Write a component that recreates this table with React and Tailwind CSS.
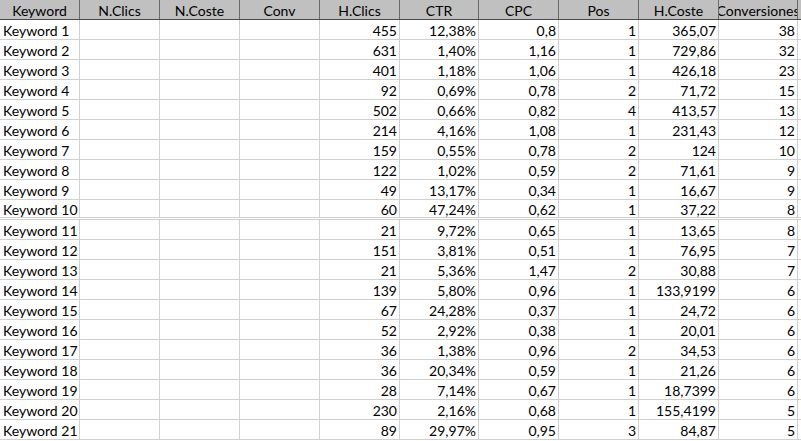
import React from "react";

const headers = ["Keyword", "N.Clics", "N.Coste", "Conv", "H.Clics", "CTR", "CPC", "Pos", "H.Coste", "Conversiones"];

const rows = [
  [455, "12,38%", "0,8", 1, "365,07", 38],
  [631, "1,40%", "1,16", 1, "729,86", 32],
  [401, "1,18%", "1,06", 1, "426,18", 23],
  [92, "0,69%", "0,78", 2, "71,72", 15],
  [502, "0,66%", "0,82", 4, "413,57", 13],
  [214, "4,16%", "1,08", 1, "231,43", 12],
  [159, "0,55%", "0,78", 2, "124", 10],
  [122, "1,02%", "0,59", 2, "71,61", 9],
  [49, "13,17%", "0,34", 1, "16,67", 9],
  [60, "47,24%", "0,62", 1, "37,22", 8],
  [21, "9,72%", "0,65", 1, "13,65", 8],
  [151, "3,81%", "0,51", 1, "76,95", 7],
  [21, "5,36%", "1,47", 2, "30,88", 7],
  [139, "5,80%", "0,96", 1, "133,9199", 6],
  [67, "24,28%", "0,37", 1, "24,72", 6],
  [52, "2,92%", "0,38", 1, "20,01", 6],
  [36, "1,38%", "0,96", 2, "34,53", 6],
  [36, "20,34%", "0,59", 1, "21,26", 6],
  [28, "7,14%", "0,67", 1, "18,7399", 6],
  [230, "2,16%", "0,68", 1, "155,4199", 5],
  [89, "29,97%", "0,95", 3, "84,87", 5],
];

const cols = "grid grid-cols-[80px_80px_80px_80px_80px_79px_80px_80px_80px_79px]";

const App = () => {
  return (
    <div className="w-[801px] h-[441px] bg-white overflow-hidden text-[14px] leading-none text-black" style={{ fontFamily: "Lato, 'Open Sans', sans-serif" }}>
      <div className={`${cols} h-[20px] bg-[#c0c0c0] border-b border-[#4a4a4a]`}>
        {headers.map((h) => (
          <div
            key={h}
            className="flex items-center justify-center pt-[2px] overflow-hidden whitespace-nowrap border-r border-[#6b6b6b]"
          >
            {h}
          </div>
        ))}
      </div>

      {rows.map((r, idx) => (
        <div
          key={idx}
          className={`${cols} h-[20px] ${idx === 9 ? "border-b-[3px] border-double" : "border-b"} border-[#d0d0d0]`}
        >
          <div className="flex items-center pt-[2px] pl-[3px] border-r border-[#d0d0d0] whitespace-nowrap">Keyword {idx + 1}</div>
          <div className="border-r border-[#d0d0d0]" />
          <div className="border-r border-[#d0d0d0]" />
          <div className="border-r border-[#d0d0d0]" />
          {r.map((v, j) => (
            <div key={j} className="flex items-center justify-end pt-[2px] pr-[2px] border-r border-[#d0d0d0] whitespace-nowrap">
              {v}
            </div>
          ))}
        </div>
      ))}
    </div>
  );
};

export default App;
